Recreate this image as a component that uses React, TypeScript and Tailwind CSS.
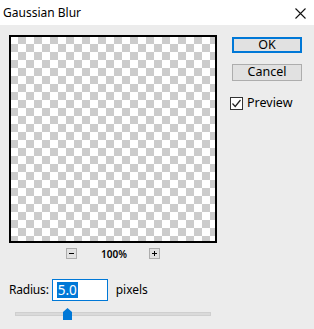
export default function App() {
    const font = { fontFamily: '"Segoe UI", "Noto Sans", "Open Sans", sans-serif' }

    return (
        <div style={font} className="w-[314px] h-[329px] bg-[#ececec] text-black flex flex-col overflow-hidden">
            <div className="h-[25px] bg-white flex items-center justify-between pl-[3px] pr-[8px]">
                <span className="text-[12px] leading-none">Gaussian Blur</span>
                <svg width="11" height="11" viewBox="0 0 11 11" className="mt-[1px]">
                    <path d="M0.5 0.5 L10.5 10.5 M10.5 0.5 L0.5 10.5" stroke="#111" strokeWidth="1.1" />
                </svg>
            </div>
            <div className="flex">
                <div className="pl-[9px] pt-[10px] flex flex-col">
                    <div className="w-[208px] h-[208px] border-2 border-black bg-[length:16px_16px] bg-[conic-gradient(#cccccc_25%,#ffffff_0_50%,#cccccc_0_75%,#ffffff_0)] bg-[position:-1px_-1px]"></div>
                    <div className="flex items-center mt-[5px] h-[11px]">
                        <div className="ml-[57px] w-[11px] h-[11px] border border-[#adadad] bg-[#e1e1e1] flex items-center justify-center">
                            <div className="w-[5px] h-px bg-black"></div>
                        </div>
                        <span className="ml-[24px] text-[10px] font-semibold leading-none">100%</span>
                        <div className="ml-[22px] w-[11px] h-[11px] border border-[#adadad] bg-[#e1e1e1] flex items-center justify-center relative">
                            <div className="w-[5px] h-px bg-black"></div>
                            <div className="absolute w-px h-[5px] bg-black"></div>
                        </div>
                    </div>
                    <div className="flex items-center mt-[20px]">
                        <span className="text-[12px] leading-none tracking-[-0.2px]">Radius:</span>
                        <div className="ml-[3px] w-[56px] h-[22px] border border-[#0078d7] bg-white flex items-center pl-[4px]">
                            <span className="bg-[#0078d7] text-white text-[13.5px] leading-[16px] px-px">5.0</span>
                        </div>
                        <span className="ml-[8px] text-[12px] leading-none">pixels</span>
                    </div>
                    <div className="relative mt-[7px] ml-[6px] w-[196px] h-[12px] flex items-center">
                        <div className="w-full h-[4px] bg-[#dadada] border border-[#cfcfcf]"></div>
                        <svg width="9" height="12" viewBox="0 0 9 12" className="absolute left-[48px] top-0">
                            <path d="M0 4 L4.5 0 L9 4 L9 12 L0 12 Z" fill="#0078d7" />
                        </svg>
                    </div>
                </div>
                <div className="ml-[15px] pt-[12px] flex flex-col">
                    <div className="w-[70px] h-[16px] border-2 border-[#0078d7] bg-[#e1e1e1] flex items-center justify-center text-[12.5px] leading-none">OK</div>
                    <div className="mt-[11px] w-[70px] h-[17px] border border-[#adadad] bg-[#e1e1e1] flex items-center justify-center text-[12.5px] leading-none">Cancel</div>
                    <div className="mt-[16px] flex items-center -ml-[2px]">
                        <div className="w-[13px] h-[13px] border border-[#333] bg-white flex items-center justify-center">
                            <svg width="11" height="11" viewBox="0 0 11 11">
                                <path d="M1.5 5.5 L4.2 8.5 L9.5 2" stroke="#222" strokeWidth="1.2" fill="none" />
                            </svg>
                        </div>
                        <span className="ml-[4px] text-[12.5px] leading-none">Preview</span>
                    </div>
                </div>
            </div>
        </div>
    )
}
